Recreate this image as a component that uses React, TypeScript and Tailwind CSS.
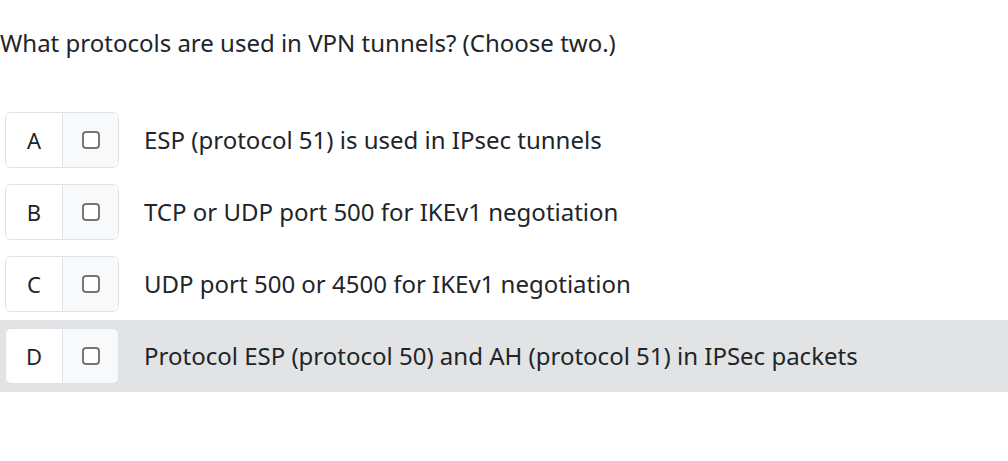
import { useState } from "react";

type Option = { key: string; text: string };

const options: Option[] = [
  { key: "A", text: "ESP (protocol 51) is used in IPsec tunnels" },
  { key: "B", text: "TCP or UDP port 500 for IKEv1 negotiation" },
  { key: "C", text: "UDP port 500 or 4500 for IKEv1 negotiation" },
  { key: "D", text: "Protocol ESP (protocol 50) and AH (protocol 51) in IPSec packets" },
];

export default function App() {
  const [hovered] = useState("D");

  return (
    <div className="min-h-[461px] w-full bg-white text-[#212529] font-['Noto_Sans','Open_Sans',sans-serif]">
      <p className="pt-[26px] text-[24px] leading-[34px]">What protocols are used in VPN tunnels? (Choose two.)</p>

      <div className="mt-[44px] flex flex-col">
        {options.map((o) => (
          <label
            key={o.key}
            className={`flex h-[72px] items-center gap-[25px] pl-[5px] ${hovered === o.key ? "bg-[#e2e3e5]" : ""}`}
          >
            <div className="flex h-[56px] w-[114px] shrink-0 overflow-hidden rounded-[6px] border border-[#dee2e6]">
              <span className="flex w-[57px] items-center justify-center border-r border-[#dee2e6] bg-white text-[22px]">
                {o.key}
              </span>
              <span className="flex flex-1 items-center justify-center bg-[#f8f9fa]">
                <span className="block h-[18px] w-[18px] shrink-0 rounded-[4px] border-2 border-[#767676] bg-white" />
              </span>
            </div>
            <span className="text-[24px]">{o.text}</span>
          </label>
        ))}
      </div>
    </div>
  );
}
